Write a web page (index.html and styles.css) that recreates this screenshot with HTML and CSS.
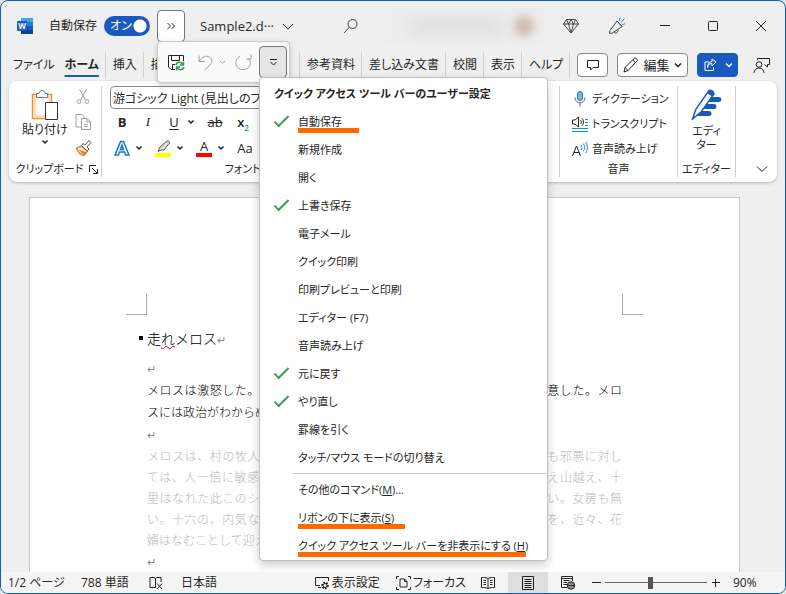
FILE: index.html
```html
<!DOCTYPE html>
<html lang="ja">
<head>
    <meta charset="UTF-8">
    <title>Sample2.docx - Word</title>
    <link rel="stylesheet" href="styles.css">
</head>
<body>
    <div class="window">
        <header class="titlebar">
            <svg class="word-logo" width="16" height="16" viewBox="0 0 16 16">
                <rect x="4" y="0" width="12" height="4" fill="#41a5ee"/>
                <rect x="4" y="4" width="12" height="4" fill="#2b7cd3"/>
                <rect x="4" y="8" width="12" height="4" fill="#185abd"/>
                <rect x="4" y="12" width="12" height="4" fill="#103f91"/>
                <rect x="0" y="3" width="10" height="10" rx="1" fill="#185abd"/>
                <text x="5" y="11" font-size="8" font-weight="700" text-anchor="middle" fill="#fff">W</text>
            </svg>
            <label class="autosave" for="autosave">自動保存</label>
            <span class="switch">
                <input type="checkbox" id="autosave" checked>
                <span class="switch-text">オン</span>
            </span>
            <button class="more" aria-label="その他">
                <svg width="10" height="10" viewBox="0 0 10 10" class="line dark"><path d="M1.500 2l3 3-3 3M5.500 2l3 3-3 3"/></svg>
            </button>
            <button class="doc-name">Sample2.d···
                <svg width="12" height="12" viewBox="0 0 12 12" class="line dark"><path d="M1 4l5 5 5-5"/></svg>
            </button>
            <button class="icon-btn search" aria-label="検索">
                <svg width="16" height="16" viewBox="0 0 16 16" class="line"><circle cx="9.500" cy="6" r="4.500"/><path d="M6.300 9.200L1 15"/></svg>
            </button>
            <div class="account"><span class="account-name"></span><span class="account-photo"></span></div>
            <button class="icon-btn premium" aria-label="Premium">
                <svg width="16" height="16" viewBox="0 0 16 16" class="line"><path d="M3.500 1.500h9l3 4.500L8 15 .5 6zM.5 6h15M5.500 6L8 15l2.500-9M3.500 1.500l2 4.500L8 1.500 10.500 6l2-4.500"/></svg>
            </button>
            <button class="icon-btn news" aria-label="新機能">
                <svg width="18" height="18" viewBox="0 0 18 18" class="line"><path d="M9 4L2 13.500 1.500 16.500 4.500 16 14 9.500zM9 4l5 5.500M6 14.500c.5 2.500 4 2 4-1.500"/><path class="blue" d="M11 4l1-3M13 5.500l3.500-4M14.500 7.500l2.500-.8"/></svg>
            </button>
            <button class="caption" aria-label="最小化"><svg width="12" height="12" viewBox="0 0 12 12" class="line dark"><path d="M1 5.500h10"/></svg></button>
            <button class="caption" aria-label="最大化"><svg width="12" height="12" viewBox="0 0 12 12" class="line dark"><rect x="1.500" y="1.500" width="9" height="9" rx="1"/></svg></button>
            <button class="caption" aria-label="閉じる"><svg width="12" height="12" viewBox="0 0 12 12" class="line dark"><path d="M1 1l10 10M11 1L1 11"/></svg></button>
        </header>

        <nav class="tabs">
            <div class="tabs-first">
                <a href="#" class="tab file">ファイル</a>
                <a href="#" class="tab active">ホーム</a>
                <a href="#" class="tab">挿入</a>
                <a href="#" class="tab">描画</a>
                <a href="#" class="tab">デザイン</a>
            </div>
            <a href="#" class="tab">参考資料</a>
            <a href="#" class="tab">差し込み文書</a>
            <a href="#" class="tab">校閲</a>
            <a href="#" class="tab">表示</a>
            <a href="#" class="tab">ヘルプ</a>
            <div class="tab-actions">
                <button class="outline comment" aria-label="コメント">
                    <svg width="12" height="12" viewBox="0 0 12 12" class="line dark"><path d="M.5 1.500h11v7H6L3.500 11V8.500h-3z"/></svg>
                </button>
                <button class="outline edit">
                    <svg width="16" height="16" viewBox="0 0 16 16" class="line dark"><path d="M1 15l1-4.500L11.500 1.200c1-.9 3.500 1.300 2.800 2.500L5 13.500zM2 10.500l3 3M9.800 3l3 3"/></svg>
                    編集
                    <svg width="8" height="8" viewBox="0 0 8 8" class="line dark arrow"><path d="M1 2.500l3 3 3-3"/></svg>
                </button>
                <button class="share" aria-label="共有">
                    <svg width="14" height="14" viewBox="0 0 14 14" class="line white"><path d="M6 4H2v8.500h8.500V9M4.500 9.500c.5-3 2-4 4.500-4V8l4-4-4-3v2.500C6 4 4.500 6 4.500 9.500z"/></svg>
                    <svg width="8" height="8" viewBox="0 0 8 8" class="line white arrow"><path d="M1 2.500l3 3 3-3"/></svg>
                </button>
                <button class="icon-btn" aria-label="共同編集者">
                    <svg width="17" height="17" viewBox="0 0 17 17" class="line dark"><circle cx="6" cy="7.500" r="2.800"/><path d="M1 16c.3-3.500 2.500-5 5-5s4.700 1.500 5 5M4.500 3V1.500h12v6h-2v2.500L11.500 7.500"/></svg>
                </button>
            </div>
        </nav>

        <section class="ribbon">
            <div class="group clipboard">
                <div class="group-body">
                    <button class="paste">
                        <svg width="28" height="32" viewBox="0 0 28 32"><path d="M1.500 4.500h19v24h-19z" fill="#fafafa" stroke="#e8912d" stroke-width="1.500"/><path d="M3.500 6.500h15v20h-15z" fill="#fafafa" stroke="#fbd9a5" stroke-width="2"/><path d="M5.500 7.500v-4H8c.5-4 5.500-4 6 0h2.500v4z" fill="#fff" stroke="#777"/><path d="M14.500 12.500h12v17h-12z" fill="#fff" stroke="#333"/></svg>
                        貼り付け
                        <svg width="8" height="8" viewBox="0 0 8 8" class="line dark arrow"><path d="M1.500 2.500L4 5l2.500-2.500"/></svg>
                    </button>
                    <div class="clip-tools">
                        <button aria-label="切り取り"><svg width="16" height="18" viewBox="0 0 16 18" class="line pale"><path d="M4.500 2l6 11M11.500 2l-6 11"/><circle cx="4" cy="14.500" r="1.900"/><circle cx="12" cy="14.500" r="1.900"/></svg></button>
                        <button aria-label="コピー"><svg width="17" height="18" viewBox="0 0 17 18" class="line pale"><path d="M6 14H1V1.500h6l2 2V5M6.500 5.500H12l3.500 3.500v7.500h-9zM12 5.500V9h3.500M9 11.500h4M9 13.500h4"/></svg></button>
                        <button aria-label="書式のコピー"><svg width="17" height="18" viewBox="0 0 17 18"><path d="M1.500 9l5-2 6 5-3.500 4.500c-3-.5-6-3-7.500-7.500z" fill="#fbe3c8" stroke="#e8761d" stroke-width="1.300"/><path d="M4 11l5 5 2-3z" fill="#e8761d"/><path d="M6.500 6.500l6 5.500 1.500-2-2-2 4-4.500-2-2L10 6 8 4.500z" fill="#fff" stroke="#555"/></svg></button>
                    </div>
                </div>
                <div class="group-name">クリップボード
                    <svg width="9" height="9" viewBox="0 0 9 9" class="line dark"><path d="M.5 7V.5H7M3 3l5 5M8.500 4v4.500H4"/></svg>
                </div>
            </div>
            <div class="group font">
                <input class="font-name" type="text" aria-label="フォント名" value="游ゴシック Light (見出しのフォント - 日本語)">
                <div class="font-row">
                    <button class="bold">B</button>
                    <button class="italic">I</button>
                    <button class="under">U</button>
                    <svg width="8" height="8" viewBox="0 0 8 8" class="line dark arrow"><path d="M1.500 2.500L4 5l2.500-2.500"/></svg>
                    <button class="strike">ab</button>
                    <button class="subscript">x<sub>2</sub></button>
                </div>
                <div class="font-row">
                    <button class="effect" aria-label="文字の効果"><svg width="16" height="16" viewBox="0 0 16 16"><path d="M1 15L6.500 1.500h3L15 15h-3.500l-1-3h-5l-1 3zM6.500 9.500h3L8 5z" fill="#eaf4fc" stroke="#1e78c8" stroke-width="1.500"/></svg></button>
                    <svg width="8" height="8" viewBox="0 0 8 8" class="line dark arrow"><path d="M1.500 2.500L4 5l2.500-2.500"/></svg>
                    <button class="marker" aria-label="蛍光ペン"><svg width="16" height="17" viewBox="0 0 16 17"><path d="M5 7l7-6c1.500-.5 3 1 2.500 2L9 10H6L3 11.500z" fill="#ddd" stroke="#555"/><path fill="#ff0" d="M0 13h16v4H0z"/></svg></button>
                    <svg width="8" height="8" viewBox="0 0 8 8" class="line dark arrow"><path d="M1.500 2.500L4 5l2.500-2.500"/></svg>
                    <button class="color">A</button>
                    <svg width="8" height="8" viewBox="0 0 8 8" class="line dark arrow"><path d="M1.500 2.500L4 5l2.500-2.500"/></svg>
                    <button class="case">Aa</button>
                </div>
                <div class="group-name">フォント</div>
            </div>
            <div class="group paragraph"></div>
            <div class="group voice">
                <button><svg width="16" height="16" viewBox="0 0 16 16"><rect x="5.500" y=".5" width="5" height="9" rx="2.500" fill="#77b5e8" stroke="#1e78c8"/><path d="M3 6.500c0 7 10 7 10 0M8 12v3.500" fill="none" stroke="#666"/></svg>ディクテーション</button>
                <button><svg width="16" height="16" viewBox="0 0 16 16" class="line dark"><path d="M.5 4v4H3l3.500 3V1L3 4zM8.500 4c1 1 1 3 0 4M10 2.500c2 2 2 5 0 7"/><path class="blue" d="M13 3.500h3M13 6.500h3M13 9.500h3M0 12.500h16M0 15.500h16"/></svg>トランスクリプト</button>
                <button><svg width="16" height="16" viewBox="0 0 16 16" class="line dark"><path d="M.5 15L4.500 5l4 10M2 11.500h5"/><path class="blue" d="M9 4c1 1.500 1 3.500 0 5M11.200 2.500c1.800 2 1.800 6 0 8M13.500 1c2.500 3 2.500 8 0 11"/></svg>音声読み上げ</button>
                <div class="group-name">音声</div>
            </div>
            <div class="group editor">
                <button>
                    <svg width="32" height="32" viewBox="0 0 32 32"><path d="M18 9h10a2.500 2.500 0 010 5H16zM14 16h9a2.500 2.500 0 010 5H12zM9 23h9a2.500 2.500 0 010 5H6z" fill="#185abd"/><path d="M1.500 31L5 21 18 2.500c2-1 5 1 5 3.500L10 24z" fill="#fff" stroke="#185abd" stroke-width="1.500"/><path d="M18 2.500c2-1 5 1 5 3.500l-2 2.500-5-3.500z" fill="#185abd"/></svg>
                    <span>エディ<br>ター</span>
                </button>
                <div class="group-name">エディター</div>
            </div>
            <button class="collapse" aria-label="リボンを折りたたむ">
                <svg width="12" height="12" viewBox="0 0 12 12" class="line dark"><path d="M1 3.500l5 5 5-5"/></svg>
            </button>
        </section>

        <main class="desk">
            <article class="page">
                <div class="corners"><span class="corner left"></span><span class="corner right"></span></div>
                <h1 class="heading">走<span class="typo">れ</span>メロス<span class="mark">↵</span></h1>
                <p><span class="mark">↵</span></p>
                <p>
                    <span class="full">メロスは激怒した。必ず、かの邪智暴虐の王を除かなければならぬと決意した。メロ</span>
                    <span class="last">スには政治がわからぬ。<span class="mark">↵</span></span>
                </p>
                <p><span class="mark">↵</span></p>
                <p class="dim">
                    <span class="full">メロスは、村の牧人である。笛を吹き、羊と遊んで暮して来た。けれども邪悪に対し</span>
                    <span class="full">ては、人一倍に敏感であった。きょう未明メロスは村を出発し、野を越え山越え、十</span>
                    <span class="full">里はなれた此このシラクスの市にやって来た。メロスには父も、母も無い。女房も無</span>
                    <span class="full">い。十六の、内気な妹と二人暮しだ。この妹は、村の或る律気な一牧人を、近々、花</span>
                    <span class="last">婿はなむことして迎える事になっていた。</span>
                </p>
                <p><span class="mark">↵</span></p>
            </article>
        </main>

        <footer class="status">
            <span class="page-count">1/2 ページ</span>
            <span class="words">788 単語</span>
            <svg class="line dark" width="14" height="14" viewBox="0 0 14 14"><path d="M6.500 11.500H1v-10h4.500L6.500 3v8.500M6.500 3l1-1.500H12V6M8 7.500l5 5.500M13 7.500L8 13"/></svg>
            <span class="lang">日本語</span>
            <button class="view-set">
                <svg width="15" height="14" viewBox="0 0 15 14" class="line dark"><path d="M5 9.500H.5v-8h13V5M3 11.500h3"/><circle cx="10" cy="9.500" r="2.800" stroke-width="2" stroke-dasharray="1.600 1.200"/><circle cx="10" cy="9.500" r="2"/></svg>
                表示設定
            </button>
            <button class="focus">
                <svg width="15" height="14" viewBox="0 0 15 14" class="line dark"><path d="M3 .5H.5V3M12 .5h2.500V3M3 13.500H.5V11M12 13.500h2.500V11M4 3h4.500L11 5.500V11H4zM8.500 3v2.500H11"/></svg>
                フォーカス
            </button>
            <button class="view" aria-label="閲覧モード">
                <svg width="14" height="14" viewBox="0 0 14 14" class="line dark"><path d="M7 2.500C5 1.500 3 1.500 .5 1.500v10c2.500 0 4.500 0 6.500 1 2-1 4-1 6.500-1v-10C11 1.500 9 1.500 7 2.500zM7 2.500v10M2.500 4.500H5M2.500 6.500H5M2.500 8.500H5M9 4.500h2.500M9 6.500h2.500M9 8.500h2.500"/></svg>
            </button>
            <button class="view current" aria-label="印刷レイアウト">
                <svg width="12" height="14" viewBox="0 0 12 14" class="line dark"><path d="M.5.5h11v13H.5zM2.500 3.500h7M2.500 5.500h7M2.500 7.500h7M2.500 9.500h7M2.500 11.500h7"/></svg>
            </button>
            <button class="view" aria-label="Web レイアウト">
                <svg width="15" height="14" viewBox="0 0 15 14" class="line dark"><path d="M6 11.500H.5V.5h11V5M.5 2.500h11M2.500 4.500h6M2.500 6.500H6M2.500 8.500H6"/><circle cx="10" cy="9.500" r="3.800"/><path d="M6.500 9.500h7M10 6v7M8.500 6.500c-1 2-1 4 0 6M11.500 6.500c1 2 1 4 0 6"/></svg>
            </button>
            <button class="zoom-btn" aria-label="縮小"><svg width="9" height="9" viewBox="0 0 9 9" class="line dark"><path d="M0 4.500h9"/></svg></button>
            <input class="zoom" type="range" min="10" max="200" value="95" aria-label="ズーム">
            <button class="zoom-btn" aria-label="拡大"><svg width="9" height="9" viewBox="0 0 9 9" class="line dark"><path d="M1 4.500h8M4.500 1v8"/></svg></button>
            <span class="percent">90%</span>
        </footer>

        <div class="quick-bar">
            <button aria-label="上書き保存">
                <svg width="17" height="17" viewBox="0 0 17 17" class="line dark"><path d="M7 15.500H3L.5 13V1.500h15V7M3.500 1.500v5h8v-5M4.500 15.500v-5H7"/><path class="green" d="M8 11c1-3.500 5.500-3.500 7-.5M15.500 7.500v3.500H12M16 13c-1 3.500-5.500 3.500-7 .5M8.500 16.500V13H12"/></svg>
            </button>
            <button class="undo" aria-label="元に戻す">
                <svg width="16" height="17" viewBox="0 0 16 17" class="line pale"><path d="M1 1.500v6h6M1.500 7C4 3 8 1 11.500 3s3 6 0 8.500L6.500 16"/></svg>
                <svg width="7" height="7" viewBox="0 0 7 7" class="line pale"><path d="M1 2l2.500 2.500L6 2"/></svg>
            </button>
            <button class="redo" aria-label="やり直し">
                <svg width="17" height="17" viewBox="0 0 17 17" class="line pale"><path d="M11 5h5V.5M5 2C-1 5 -.5 13.500 6 15.500c8 1.500 12-6 7.500-11"/></svg>
            </button>
            <button class="customize" aria-label="クイック アクセス ツール バーのユーザー設定">
                <svg width="9" height="9" viewBox="0 0 9 9" class="line dark"><path d="M1 1.500h7M1.500 4l3 3 3-3"/></svg>
            </button>
        </div>

        <div class="menu">
            <div class="menu-title">クイック アクセス ツール バーのユーザー設定</div>
            <button class="item checked noted note-short">自動保存</button>
            <button class="item">新規作成</button>
            <button class="item">開く</button>
            <button class="item checked">上書き保存</button>
            <button class="item">電子メール</button>
            <button class="item">クイック印刷</button>
            <button class="item">印刷プレビューと印刷</button>
            <button class="item">エディター (F7)</button>
            <button class="item">音声読み上げ</button>
            <button class="item checked">元に戻す</button>
            <button class="item checked">やり直し</button>
            <button class="item">罫線を引く</button>
            <button class="item">タッチ/マウス モードの切り替え</button>
            <hr>
            <button class="item">その他のコマンド(<u>M</u>)...</button>
            <button class="item noted note-mid">リボンの下に表示(<u>S</u>)</button>
            <button class="item noted note-long">クイック アクセス ツール バーを非表示にする (<u>H</u>)</button>
        </div>
    </div>
</body>
</html>
```

FILE: styles.css
```css
* {
    box-sizing: border-box;
}
body {
    margin: 0;
    background-color: #dfe3e8;
    font-family: "Open Sans", "Noto Sans CJK JP", sans-serif;
    font-size: 12px;
    line-height: 16px;
    color: #262626;
    font-feature-settings: "palt";
}
button, input {
    font: inherit;
    font-feature-settings: inherit;
    color: inherit;
}
button {
    padding: 0;
    border: none;
    background: none;
    white-space: nowrap;
}
svg {
    display: block;
    flex: none;
}
.line {
    fill: none;
    stroke: #444;
}
.dark {
    stroke: #222;
}
.pale {
    stroke: #a0a0a0;
}
.white {
    stroke: #fff;
}
.blue {
    stroke: #1e88d8;
}
.green {
    stroke: #2f9e4f;
    stroke-width: 1.5;
}
.arrow {
    stroke-width: 1.5;
}
.window {
    position: relative;
    display: flex;
    flex-direction: column;
    height: 100vh;
    padding-top: 1px;
    border: 1px solid #185abd;
    border-radius: 8px;
    background-color: #efefef;
    overflow: hidden;
}

/* title bar */
.titlebar {
    display: flex;
    align-items: center;
    height: 48px;
    padding-left: 16px;
}
.autosave {
    margin-left: 16px;
}
.switch {
    position: relative;
    width: 46px;
    height: 20px;
    margin-left: 7px;
}
.switch input {
    appearance: none;
    display: block;
    width: 46px;
    height: 20px;
    margin: 0;
    border-radius: 10px;
    background: radial-gradient(circle at 36px 10px, #fff 6px, #185abd 7px);
}
.switch-text {
    position: absolute;
    left: 6px;
    top: 2px;
    color: #fff;
    pointer-events: none;
}
.more {
    display: flex;
    align-items: center;
    justify-content: center;
    width: 28px;
    height: 32px;
    margin-left: 7px;
    border: 1px solid #777;
    border-radius: 4px;
    background-color: #fff;
}
.doc-name {
    display: flex;
    align-items: center;
    gap: 8px;
    margin-left: 15px;
    font-size: 13px;
}
.icon-btn {
    display: flex;
    align-items: center;
    justify-content: center;
}
.search {
    margin-left: auto;
}
.account {
    display: flex;
    align-items: center;
    justify-content: flex-end;
    gap: 10px;
    width: 160px;
    height: 38px;
    margin: 0 18px 0 26px;
    padding-right: 11px;
    background-color: #ededed;
    overflow: hidden;
}
.account-name {
    width: 94px;
    height: 10px;
    background-color: #d8d8d8;
    filter: blur(8px);
}
.account-photo {
    width: 20px;
    height: 20px;
    border-radius: 50%;
    background-color: #cdb9ab;
    filter: blur(5px);
}
.news {
    margin: 0 15px 0 29px;
}
.caption {
    display: flex;
    align-items: center;
    justify-content: center;
    width: 48px;
    height: 40px;
}

/* tabs */
.tabs {
    display: flex;
    align-items: center;
    height: 30px;
}
.tabs-first {
    display: flex;
    flex: 0 0 299px;
    border-right: 1px solid #d0d0d0;
    overflow: hidden;
}
.tab {
    padding: 4px 6px 4px 7px;
    border-right: 1px solid #d0d0d0;
    line-height: 18px;
    color: inherit;
    text-decoration: none;
    white-space: nowrap;
}
.tab.file {
    padding: 4px 8px 4px 12px;
    border: none;
}
.tab.active {
    padding-left: 2px;
    font-weight: 700;
    text-decoration: underline 2px #185abd;
    text-underline-offset: 6px;
}
.tab-actions {
    display: flex;
    align-items: center;
    gap: 9px;
    margin-left: auto;
    padding-right: 15px;
}
.tab-actions .icon-btn {
    margin-left: 6px;
}
.outline, .share {
    display: flex;
    align-items: center;
    justify-content: center;
    height: 24px;
    border: 1px solid #8a8886;
    border-radius: 4px;
    background-color: #fff;
}
.comment {
    width: 31px;
}
.edit {
    gap: 4px;
    width: 71px;
    font-size: 13px;
}
.share {
    gap: 8px;
    width: 41px;
    border-color: #185abd;
    background-color: #185abd;
}

/* ribbon */
.ribbon {
    display: flex;
    margin: 1px 8px 0;
    height: 101px;
    padding: 5px 0;
    border-radius: 8px;
    background-color: #fff;
    box-shadow: 0 1px 3px rgba(0, 0, 0, 0.25);
}
.group {
    display: flex;
    flex-direction: column;
    border-right: 1px solid #d0d0d0;
}
.group-name {
    display: flex;
    align-items: center;
    justify-content: center;
    gap: 6px;
    margin-top: auto;
    font-size: 11px;
    white-space: nowrap;
}
.clipboard {
    flex: 0 0 93px;
    padding-left: 4px;
}
.group-body {
    display: flex;
    gap: 7px;
    padding-left: 9px;
}
.paste {
    display: flex;
    flex-direction: column;
    align-items: center;
    padding-top: 4px;
}
.clip-tools {
    display: flex;
    flex-direction: column;
    gap: 8px;
    padding-top: 1px;
}
.font {
    flex: 0 0 274px;
    padding-left: 8px;
}
.font-name {
    width: 190px;
    height: 23px;
    padding: 0 2px;
    border: 1px solid #8a8886;
    border-radius: 4px;
}
.font-row {
    display: flex;
    align-items: center;
    gap: 5px;
    height: 26px;
    padding-left: 4px;
    font-size: 13px;
}
.font-row button {
    width: 16px;
    text-align: center;
}
.font-row .bold {
    font-weight: 700;
}
.font-row .italic {
    margin-left: 5px;
    font-family: "Liberation Serif", serif;
    font-style: italic;
}
.font-row .under {
    margin-left: 5px;
    text-decoration: underline;
    text-underline-offset: 2px;
}
.font-row .strike, .font-row .subscript, .font-row .marker, .font-row .color, .font-row .case {
    margin-left: 7px;
}
.strike {
    text-decoration: line-through;
}
.subscript {
    font-weight: 600;
}
.subscript sub {
    font-size: 8px;
    line-height: 0;
    color: #1e88d8;
}
.font-row .color {
    border-bottom: 4px solid #f00;
    line-height: 13px;
}
.paragraph {
    flex: 1;
}
.voice {
    flex: 0 0 118px;
    padding-left: 12px;
    font-size: 11px;
}
.voice button {
    display: flex;
    align-items: center;
    gap: 4px;
    height: 26px;
}
.voice .group-name {
    padding-right: 12px;
}
.editor {
    flex: 0 0 58px;
}
.editor button {
    display: flex;
    flex-direction: column;
    align-items: center;
    gap: 4px;
    padding-top: 2px;
    font-size: 11px;
    line-height: 14px;
}
.collapse {
    align-self: flex-end;
    margin: 0 9px 2px 20px;
}

/* document */
.desk {
    flex: 1;
    min-height: 0;
    padding: 15px 45px 0 28px;
    overflow: hidden;
}
.page {
    height: 600px;
    padding: 96px 117px 0;
    border: 1px solid #c6c6c6;
    background-color: #fff;
    font-family: "Noto Sans CJK JP", sans-serif;
    font-weight: 300;
    font-feature-settings: normal;
    line-height: 22px;
    color: #000;
}
.corners {
    display: flex;
    justify-content: space-between;
    margin: 0 -21px 12px;
}
.corner {
    width: 21px;
    height: 21px;
    border-bottom: 1px solid #aaa;
}
.left {
    border-right: 1px solid #aaa;
}
.right {
    border-left: 1px solid #aaa;
}
.heading {
    position: relative;
    margin: 0 0 8px;
    font-size: 14px;
    font-weight: 300;
}
.heading::before {
    content: "";
    position: absolute;
    left: -8px;
    top: 9px;
    width: 4px;
    height: 4px;
    background-color: #000;
}
.typo {
    text-decoration: underline wavy #e00000 1px;
}
.page p {
    margin: 0;
}
.full, .last {
    display: block;
    white-space: nowrap;
}
.full {
    text-align: justify;
    text-align-last: justify;
}
.page .dim {
    line-height: 21px;
    color: #b8b8b8;
}
.mark {
    font-family: "DejaVu Sans", sans-serif;
    font-size: 11px;
    line-height: 0;
    color: #888;
}

/* status bar */
.status {
    display: flex;
    align-items: center;
    height: 21px;
    padding-left: 7px;
    background-color: #f5f5f5;
    white-space: nowrap;
}
.page-count {
    flex: 0 0 73px;
}
.words {
    flex: 0 0 68px;
}
.lang {
    margin-left: 18px;
}
.status button {
    display: flex;
    align-items: center;
    justify-content: center;
    gap: 2px;
    height: 21px;
}
.view-set {
    margin-left: auto;
    margin-right: 16px;
}
.status .focus {
    margin-right: 2px;
}
.status .view {
    width: 40px;
}
.status .current {
    background-color: #dedede;
}
.status .zoom-btn {
    margin: 0 4px;
}
.zoom {
    appearance: none;
    width: 102px;
    height: 12px;
    margin: 0;
    background: linear-gradient(#666, #666) center / 100% 1px no-repeat;
}
.zoom::-webkit-slider-thumb {
    appearance: none;
    width: 5px;
    height: 12px;
    background-color: #555;
}
.percent {
    width: 61px;
    padding-left: 9px;
}

/* quick access toolbar */
.quick-bar {
    position: absolute;
    left: 156px;
    top: 40px;
    display: flex;
    align-items: center;
    width: 133px;
    height: 42px;
    padding-left: 10px;
    border: 1px solid #c8c8c8;
    border-radius: 4px;
    background-color: #fafafa;
    box-shadow: 0 2px 5px rgba(0, 0, 0, 0.2);
}
.quick-bar button {
    display: flex;
    align-items: center;
    gap: 5px;
}
.undo {
    margin-left: 13px;
}
.redo {
    margin-left: 9px;
}
.quick-bar .customize {
    justify-content: center;
    width: 28px;
    height: 32px;
    margin-left: 7px;
    border: 1px solid #777;
    border-radius: 4px;
    background-color: #e6e6e6;
}

/* customize menu */
.menu {
    position: absolute;
    left: 258px;
    top: 76px;
    width: 289px;
    padding-top: 2px;
    border: 1px solid #c0c0c0;
    border-radius: 4px;
    background-color: #fff;
    box-shadow: 0 4px 10px rgba(0, 0, 0, 0.2);
    font-size: 11px;
}
.menu-title {
    padding-left: 14px;
    font-weight: 700;
    line-height: 28px;
}
.item {
    position: relative;
    display: block;
    width: 100%;
    height: 28px;
    padding-left: 38px;
    text-align: left;
}
.checked::before {
    content: "";
    position: absolute;
    left: 18px;
    top: 4px;
    width: 5px;
    height: 13px;
    border: solid #3a9e55;
    border-width: 0 2px 2px 0;
    transform: rotate(45deg);
}
.noted::after {
    content: "";
    position: absolute;
    left: 38px;
    bottom: 3px;
    height: 5px;
    background-color: #ff6a00;
}
.note-short::after {
    width: 61px;
}
.note-mid::after {
    width: 107px;
}
.note-long::after {
    width: 228px;
}
.menu hr {
    margin: 1px 1px 2px 33px;
    border: none;
    border-top: 1px solid #c8c8c8;
}
```
